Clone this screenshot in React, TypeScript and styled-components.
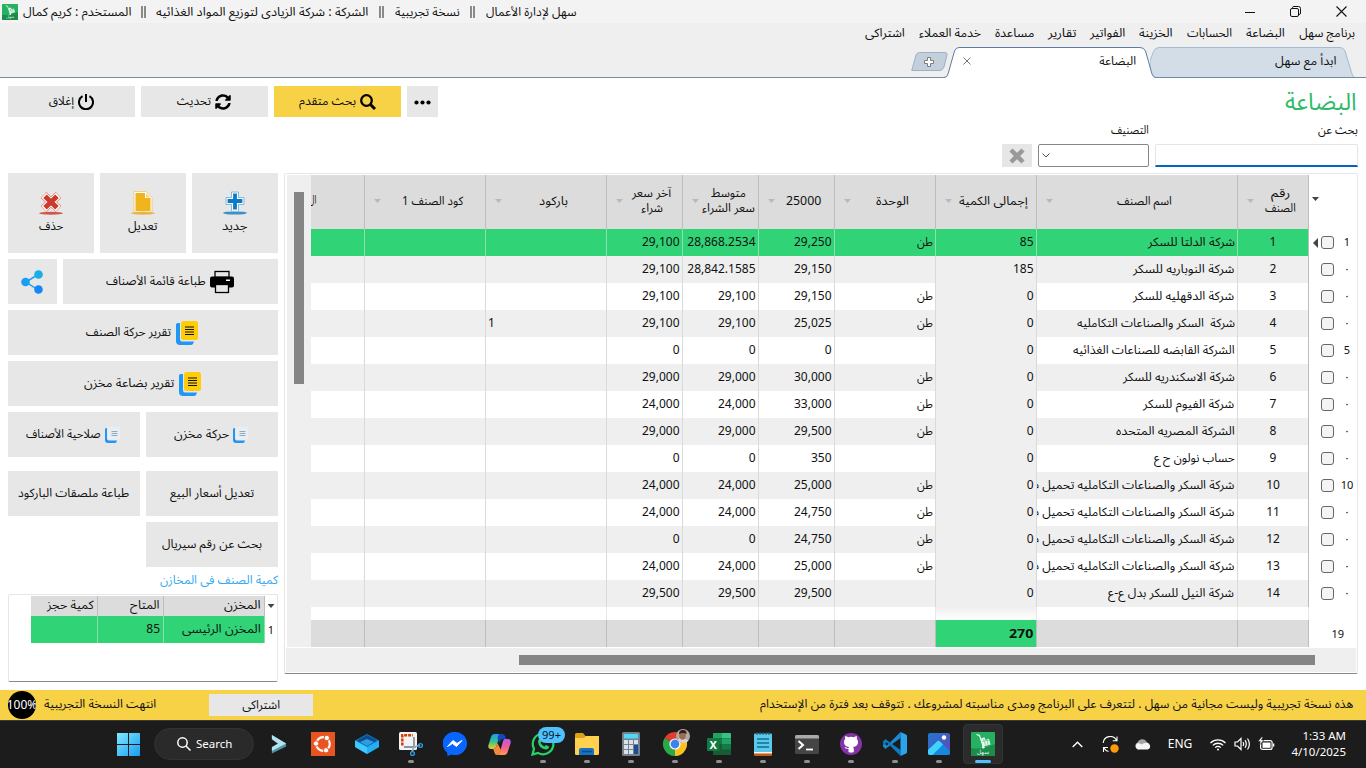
import React, { useLayoutEffect, useRef, useState } from 'react';
import styled, { createGlobalStyle, css } from 'styled-components';

const GREEN = '#30d477';

const Global = createGlobalStyle`
  * { box-sizing: border-box; }
  body { margin: 0; background: #fff; overflow: hidden; }
  svg { display: block; flex: none; }
`;

const Screen = styled.div`
  width: 1366px;
  height: 768px;
  display: flex;
  flex-direction: column;
  overflow: hidden;
  font-family: 'Noto Sans', 'Noto Sans Arabic', 'DejaVu Sans', sans-serif;
  font-size: 12px;
  line-height: 16px;
  color: #111;
`;

/* Text run squeezed or stretched to an exact width. */
const FitBox = styled.span<{ $w: number }>`
  display: inline-block;
  flex: none;
  width: ${(p) => p.$w}px;
  direction: rtl;
  text-align: right;
  white-space: pre;
`;
const FitInner = styled.span`
  display: inline-block;
  transform-origin: 100% 50%;
`;
function Fit({ w, children }: { w: number; children: React.ReactNode }) {
  const ref = useRef<HTMLSpanElement>(null);
  const [scale, setScale] = useState(1);
  useLayoutEffect(() => {
    if (ref.current && ref.current.offsetWidth) setScale(w / ref.current.offsetWidth);
  }, [w]);
  return (
    <FitBox $w={w}>
      <FitInner ref={ref} style={{ transform: `scaleX(${scale})` }}>{children}</FitInner>
    </FitBox>
  );
}

/* ---------- title bar ---------- */
const TitleBar = styled.div`
  height: 23px;
  flex: none;
  background: #f3f3f3;
  display: flex;
  align-items: center;
  padding: 0 1px 0 2px;
`;
const TitleText = styled.div`
  direction: rtl;
  width: 553px;
  margin-left: 5px;
  display: flex;
  justify-content: space-between;
  align-items: center;
`;
const Bars = styled.span`
  width: 5px;
  height: 12px;
  border: solid #8a8a8a;
  border-width: 0 2px;
`;
const WindowButtons = styled.div`
  margin-left: auto;
  display: flex;
  height: 21px;
`;
const WinButton = styled.div<{ $w: number }>`
  width: ${(p) => p.$w}px;
  display: flex;
  align-items: center;
  justify-content: center;
`;

function SahlLogo({ size }: { size: number }) {
  return (
    <svg width={size} height={size} viewBox="0 0 24 24">
      <rect width="24" height="24" rx="1" fill="#25b062" />
      <path d="M0 16 Q10 18 24 12 V24 H0z" fill="#1c8b4b" />
      <path d="M5.500 2.500 L8.500 3.500 L12 14" stroke="#fff" strokeWidth="1.100" fill="none" />
      <path d="M10 6.500 l3.500-1.200 .9 2.600 3.600-1.200 1.500 5.800-7.600 2z" fill="#e9f8ef" />
      <path d="M11 9.500l7.500-1.500M12.500 7l2 6M16 8l1 5" stroke="#25b062" strokeWidth=".5" />
      <circle cx="12.300" cy="15.300" r="1.300" fill="#fff" />
      <text x="12" y="21.500" fontSize="6" fill="#d9f3e3" textAnchor="middle" fontFamily="DejaVu Sans, sans-serif">سهل</text>
    </svg>
  );
}

/* ---------- menu and tabs ---------- */
const MenuArea = styled.div`
  height: 55px;
  flex: none;
  background: #efefef;
  display: flex;
  flex-direction: column;
`;
const Menu = styled.div`
  direction: rtl;
  height: 20px;
  padding-right: 11px;
  display: flex;
  align-items: center;
  gap: 14px;
`;
const Tabs = styled.div`
  direction: rtl;
  height: 35px;
  display: flex;
  align-items: flex-end;
  border-bottom: 1px solid #6f8cab;
  padding-right: 10px;
`;
const Tab = styled.div<{ $w: number; $overlap?: number }>`
  position: relative;
  width: ${(p) => p.$w}px;
  height: 31px;
  margin-bottom: -1px;
  margin-right: ${(p) => -(p.$overlap || 0)}px;
  padding: 0 20px 3px 19px;
  display: flex;
  align-items: center;
  justify-content: space-between;
  & > svg:first-child { position: absolute; left: 0; top: 0; }
  & > *:not(:first-child) { position: relative; }
`;
const AddTab = styled.div`
  width: 37px;
  height: 25px;
  margin-right: -4px;
`;

/* ---------- heading ---------- */
const Main = styled.div`
  height: 612px;
  flex: none;
  background: #fff;
  display: flex;
  flex-direction: column;
`;
const Top = styled.div`
  height: 95px;
  display: flex;
  justify-content: space-between;
  padding: 8px 8px 0;
`;
const Toolbar = styled.div`
  display: flex;
  gap: 6px;
`;
const Button = styled.div<{ $w?: number; $h: number; $gap?: number; $shift?: number; $primary?: boolean; $stack?: boolean }>`
  direction: rtl;
  ${(p) => (p.$w ? css`width: ${p.$w}px;` : css`flex: 1;`)}
  height: ${(p) => p.$h}px;
  padding-right: ${(p) => p.$shift || 0}px;
  background: ${(p) => (p.$primary ? '#f7d247' : '#e7e7e7')};
  display: flex;
  flex-direction: ${(p) => (p.$stack ? 'column' : 'row')};
  align-items: center;
  justify-content: center;
  gap: ${(p) => p.$gap ?? 4}px;
  ${(p) => (p.$stack
    ? css`gap: 3px; padding-bottom: 1px;`
    : css`& > svg { margin-top: 1px; } & > span { margin-bottom: 1px; }`)}
`;
const SearchArea = styled.div`
  direction: rtl;
  width: 356px;
`;
const Heading = styled.div`
  font-size: 24px;
  line-height: 30px;
  color: #2fbb6a;
  height: 36px;
  margin-right: 1px;
`;
const Fields = styled.div`
  display: flex;
  gap: 6px;
  align-items: flex-end;
`;
const Field = styled.div<{ $w: number }>`
  width: ${(p) => p.$w}px;
  display: flex;
  flex-direction: column;
  gap: 6px;
`;
const Input = styled.div`
  height: 23px;
  border: 1px solid #e5e5e5;
  border-bottom: 2px solid #0067c0;
  border-radius: 2px 2px 0 0;
`;
const Select = styled.div`
  height: 23px;
  border: 1px solid #868686;
  border-radius: 2px;
  display: flex;
  align-items: center;
  justify-content: flex-end;
  padding-left: 3px;
`;
const Clear = styled.div`
  width: 30px;
  height: 23px;
  background: #e6e6e6;
  display: flex;
  align-items: center;
  justify-content: center;
`;

/* ---------- body ---------- */
const Body = styled.div`
  display: flex;
  padding-left: 8px;
  gap: 6px;
`;
const Side = styled.div`
  direction: rtl;
  width: 270px;
  display: flex;
  flex-direction: column;
  gap: 6px;
`;
const SideRow = styled.div<{ $top?: number }>`
  display: flex;
  gap: 6px;
  margin-top: ${(p) => p.$top || 0}px;
`;
const StockTitle = styled.div`
  color: #35aaf0;
  height: 21px;
  margin-top: -1px;
`;
const StockGrid = styled.div`
  height: 88px;
  margin-top: -5px;
  border: 1px solid #e6e6e6;
  border-bottom-color: #8a8a8a;
  border-radius: 2px;
  padding: 1px 0 0;
`;
const StockRow = styled.div<{ $head?: boolean }>`
  display: flex;
  height: ${(p) => (p.$head ? 20 : 27)}px;
  ${(p) => p.$head && css`& > div:not(:first-child) { background: #dcdcdc; border-color: #bdbdbd; padding-bottom: 2px; }`}
  ${(p) => !p.$head && css`& > div:not(:first-child) { background: ${GREEN}; }`}
`;
const StockLead = styled.div`
  width: 12px;
  display: flex;
  align-items: center;
  justify-content: center;
  font-size: 11px;
`;
const StockCell = styled.div<{ $w: number }>`
  width: ${(p) => p.$w}px;
  padding: 0 3px 1px;
  display: flex;
  align-items: center;
  border-right: 1px solid #8fdcae;
`;

const Grid = styled.div`
  direction: rtl;
  width: 1074px;
  height: 501px;
  border: 1px solid #e6e6e6;
  border-bottom: 1px solid #858585;
  border-radius: 2px;
  padding: 1px 0 0 2px;
`;
const GridTop = styled.div`
  display: flex;
  height: 472px;
`;
const Rows = styled.div`
  width: 1046px;
`;
const Row = styled.div<{ $h: number }>`
  display: flex;
  height: ${(p) => p.$h}px;
  overflow: hidden;
`;
const RowHead = styled.div`
  width: 48px;
  flex: none;
  display: flex;
  align-items: center;
  font-size: 11px;
`;
const RowNo = styled.span`
  width: 23px;
  padding: 0 0 1px 3px;
  text-align: center;
`;
const Total = styled.span`
  margin-right: 13px;
`;
const CurrentMark = styled.svg`
  margin-right: 3px;
`;
const Check = styled.span`
  width: 13px;
  height: 13px;
  border: 1px solid #666;
  border-radius: 3px;
  background: #f4f4f4;
`;
type Tone = 'head' | 'sel' | 'odd' | 'even' | 'foot' | 'fade';
const bg: Record<Tone, string> = { head: '#dcdcdc', sel: GREEN, odd: '#fff', even: '#efefef', foot: '#dcdcdc', fade: '#fff' };
const line: Record<Tone, string> = { head: '#bdbdbd', sel: '#8cdfaf', odd: '#dadada', even: '#dadada', foot: '#bdbdbd', fade: '#e8e8e8' };
const Cell = styled.div<{ $w: number; $tone: Tone; $qty?: boolean; $first?: boolean; $align?: string; $clipped?: boolean }>`
  width: ${(p) => p.$w}px;
  flex: none;
  padding: 0 ${(p) => (p.$clipped ? 48 : p.$tone === 'head' ? 1 : p.$align ? 2 : 2.5)}px 1px ${(p) => (p.$clipped ? 0 : 2)}px;
  overflow: hidden;
  display: flex;
  align-items: center;
  justify-content: ${(p) => p.$align || 'flex-start'};
  white-space: pre;
  border-right: 1px solid ${(p) => (p.$first ? '#bdbdbd' : line[p.$tone])};
  background: ${(p) => (p.$qty && p.$tone === 'fade' ? 'linear-gradient(#efefef, #fff)' : p.$qty && p.$tone === 'foot' ? GREEN : p.$qty && p.$tone === 'odd' ? '#efefef' : bg[p.$tone])};
  ${(p) => p.$tone === 'head' && css`padding-bottom: 4px;`}
  ${(p) => p.$tone === 'foot' && css`font-weight: 700; font-size: 13px;`}
`;
const HeadLabel = styled.div`
  flex: 1;
  display: flex;
  flex-direction: column;
  align-items: center;
  line-height: 15px;
`;
const HeadArrow = styled.div<{ $dark?: boolean; $lead?: boolean }>`
  flex: none;
  width: 7px;
  height: 4px;
  margin: ${(p) => (p.$dark ? (p.$lead ? '0 15px 6px 0' : '0') : '2px 0 0 7px')};
  ${(p) => p.$lead && css`margin-right: auto; margin-left: 3px;`}
  clip-path: polygon(0 0, 100% 0, 50% 100%);
  background: ${(p) => (p.$dark ? '#444' : '#b9b9b9')};
`;
const VScroll = styled.div`
  width: 24px;
  background: #efefef;
  padding: 17px 7px;
`;
const VThumb = styled.div`
  width: 10px;
  height: 192px;
  background: #858585;
`;
const HScroll = styled.div`
  height: 24px;
  margin: 1px 1px 0 -1px;
  background: #efefef;
  display: flex;
  align-items: center;
  padding-right: 41px;
`;
const HThumb = styled.div`
  width: 796px;
  height: 10px;
  background: #858585;
`;

/* ---------- status bar ---------- */
const Status = styled.div`
  height: 30px;
  flex: none;
  background: #f7d247;
  display: flex;
  align-items: center;
  padding: 0 13px 0 8px;
  & > span { margin-bottom: 2px; }
`;
const Percent = styled.div`
  width: 28px;
  height: 28px;
  border-radius: 50%;
  background: #000;
  color: #fff;
  display: flex;
  align-items: center;
  justify-content: center;
  overflow: hidden;
  margin-right: 8px;
`;
const StatusButton = styled.div`
  width: 104px;
  height: 22px;
  margin: 0 auto 0 53px;
  background: #e7e7e7;
  display: flex;
  align-items: center;
  justify-content: center;
`;

/* ---------- taskbar ---------- */
const Taskbar = styled.div`
  height: 48px;
  flex: none;
  background: #1c1c1c;
  border-top: 1px solid #3a3a33;
  display: flex;
  align-items: center;
  padding: 0 20px 1px 106px;
  color: #fff;
`;
const Slot = styled.div<{ $w?: number; $active?: boolean }>`
  position: relative;
  width: ${(p) => p.$w || 44}px;
  height: 40px;
  display: flex;
  align-items: center;
  justify-content: center;
  ${(p) => p.$active && css`
    &::before { content: ''; position: absolute; inset: 0 2px; background: #2b2b2b; border: 1px solid #343434; border-radius: 4px; }
    & > svg { position: relative; }
  `}
`;
const Dot = styled.i<{ $active?: boolean }>`
  position: absolute;
  bottom: 1px;
  left: 50%;
  width: ${(p) => (p.$active ? 16 : 6)}px;
  height: 3px;
  margin-left: ${(p) => (p.$active ? -8 : -3)}px;
  border-radius: 2px;
  background: ${(p) => (p.$active ? '#4cc2ff' : '#8f8f8f')};
`;
const Badge = styled.span`
  position: absolute;
  left: 17px;
  top: 3px;
  width: 27px;
  height: 16px;
  border-radius: 8px;
  background: #4cc2ff;
  color: #111;
  font-size: 11px;
  line-height: 16px;
  text-align: center;
`;
const SearchPill = styled.div`
  width: 100px;
  height: 32px;
  margin: 0 3px 0 4px;
  border-radius: 16px;
  background: #2a2a2a;
  border: 1px solid #323232;
  display: flex;
  align-items: center;
  padding-left: 22px;
  gap: 5px;
  font-size: 11.500px;
`;
const Tray = styled.div`
  margin-left: auto;
  display: flex;
  align-items: center;
`;
const Clock = styled.div`
  width: 65px;
  text-align: right;
  font-size: 11.500px;
  line-height: 16px;
`;

const MENU: [string, number][] = [
  ['برنامج سهل', 56], ['البضاعة', 39], ['الحسابات', 45], ['الخزينة', 34], ['الفواتير', 35],
  ['تقارير', 28], ['مساعدة', 39], ['خدمة العملاء', 62], ['اشتراكى', 40],
];

const W = [71, 201, 101, 101, 76, 76, 76, 121, 121, 54];
const HEADS: [string, number][][] = [
  [['رقم', 19], ['الصنف', 31]],
  [['اسم الصنف', 55]],
  [['إجمالى الكمية', 69]],
  [['الوحدة', 33]],
  [['25000', 35]],
  [['متوسط', 35], ['سعر الشراء', 53]],
  [['آخر سعر', 39], ['شراء', 22]],
  [['باركود', 29]],
  [['كود الصنف 1', 61]],
];

const LONG = 'شركة السكر والصناعات التكامليه تحميل م';
const DATA: [string, number, string, string, string, string, string, string?][] = [
  ['شركة الدلتا للسكر', 87, '85', 'طن', '29,250', '28,868.2534', '29,100'],
  ['شركة النوباريه للسكر', 101, '185', '', '29,150', '28,842.1585', '29,100'],
  ['شركة الدقهليه للسكر', 101, '0', 'طن', '29,150', '29,100', '29,100'],
  ['شركة  السكر والصناعات التكامليه', 158, '0', 'طن', '25,025', '29,100', '29,100', '1'],
  ['الشركة القابضه للصناعات الغذائيه', 162, '0', '', '0', '0', '0'],
  ['شركة الاسكندريه للسكر', 112, '0', 'طن', '30,000', '29,000', '29,000'],
  ['شركة الفيوم للسكر', 91, '0', 'طن', '33,000', '24,000', '24,000'],
  ['الشركة المصريه المتحده', 119, '0', 'طن', '29,500', '29,000', '29,000'],
  ['حساب نولون ح ع', 81, '0', '', '350', '0', '0'],
  [LONG, 201, '0', 'طن', '25,000', '24,000', '24,000'],
  [LONG, 201, '0', 'طن', '24,750', '24,000', '24,000'],
  [LONG, 201, '0', 'طن', '24,750', '0', '0'],
  [LONG, 201, '0', 'طن', '25,000', '24,000', '24,000'],
  ['شركة النيل للسكر بدل ع-ع', 126, '0', '', '29,500', '29,500', '29,500'],
];

const DocIcon = () => (
  <svg width="22" height="24" viewBox="0 0 22 24">
    <path d="M0 3.500 Q0 2 2 2 H4 V18 Q4 20.500 6 20.500 H18 Q17 24 15 24 H4 Q0 24 0 20z" fill="#2196f3" />
    <rect x="5" y="0" width="17" height="19" rx="2.500" fill="#ffcc08" />
    <path d="M9 6.500h9M9 9h9M9 11.500h9M9 14h9" stroke="#111" strokeWidth="1.200" transform="translate(0 -.5)" />
  </svg>
);
const SmallDocIcon = () => (
  <svg width="15" height="16" viewBox="0 0 15 16">
    <path d="M0 2 Q0 1 2 1 V11.500 Q2 13.500 4 13.500 H12 Q11.500 16 10 16 H3 Q0 16 0 13z" fill="#2196f3" />
    <rect x="3" y="0" width="12" height="13" rx="1.500" fill="#e8eef2" />
    <path d="M6.500 4.500h6M6.500 6.500h6M6.500 8.500h6" stroke="#7b99a8" strokeWidth=".8" />
  </svg>
);

const running = <Dot />;

export default function App() {
  return (
    <Screen>
      <Global />
      <TitleBar>
        <SahlLogo size={16} />
        <TitleText>
          <Fit w={91}>سهل لإدارة الأعمال</Fit><Bars />
          <Fit w={65}>نسخة تجريبية</Fit><Bars />
          <Fit w={212}>الشركة : شركة الزيادى لتوزيع المواد الغذائيه</Fit><Bars />
          <Fit w={108}>المستخدم : كريم كمال</Fit>
        </TitleText>
        <WindowButtons>
          <WinButton $w={46}><svg width="10" height="10"><path d="M0 5.500h10" stroke="#111" /></svg></WinButton>
          <WinButton $w={44}>
            <svg width="11" height="11" fill="none" stroke="#111"><rect x=".5" y="2.500" width="8" height="8" rx="1.500" /><path d="M2.500 2V1.500Q2.500 .5 4 .5H8.500Q10.500 .5 10.500 2.500V7Q10.500 8.500 9 8.500" /></svg>
          </WinButton>
          <WinButton $w={48}><svg width="11" height="11"><path d="M.5.5l10 10M10.500.5l-10 10" stroke="#111" strokeWidth="1.100" /></svg></WinButton>
        </WindowButtons>
      </TitleBar>
      <MenuArea>
        <Menu>{MENU.map(([t, w]) => <Fit key={t} w={w}>{t}</Fit>)}</Menu>
        <Tabs>
          <Tab $w={206}>
            <svg width="206" height="31" viewBox="0 0 206 31"><path d="M0 30.500 V14 L3.500 4.500 Q5 .5 9 .5 H190 Q193.500 .5 195 4 L202 27 Q203 30.500 205 30.500" fill="#d3dde8" stroke="#a3bbd3" /><path d="M0 30.500H206" stroke="#6f8cab" /></svg>
            <Fit w={61}>ابدأ مع سهل</Fit>
          </Tab>
          <Tab $w={212} $overlap={6}>
            <svg width="212" height="31" viewBox="0 0 212 31"><path d="M0 30.500 Q3 30.500 4 27 L10.500 4 Q12 .5 15 .5 H196 Q200 .5 201.500 4 L208 27 Q209 30.500 212 30.500 V31 H0z" fill="#fff" /><path d="M0 30.500 Q3 30.500 4 27 L10.500 4 Q12 .5 15 .5 H196 Q200 .5 201.500 4 L208 27 Q209 30.500 212 30.500" fill="none" stroke="#5d7c9f" /></svg>
            <Fit w={37}>البضاعة</Fit>
            <svg width="8" height="8"><path d="M.5.5l7 7M7.500.5l-7 7" stroke="#777" /></svg>
          </Tab>
          <AddTab>
            <svg width="37" height="20" viewBox="0 0 37 20">
              <path d="M.7 18.500 L5 3 Q6 .5 8.500 .5 H34 Q36.500 .5 36 3 L33 15 Q31.500 18.500 29 18.500z" fill="#c3cfdb" stroke="#9db1c6" />
              <path d="M16.500 5.500h3v3h3v3h-3v3h-3v-3h-3v-3h3z" fill="#fff" stroke="#7d7d7d" />
            </svg>
          </AddTab>
        </Tabs>
      </MenuArea>
      <Main>
        <Top>
          <Toolbar>
            <Button $w={127} $h={31}>
              <svg width="16" height="16" viewBox="0 0 16 16" fill="none" stroke="#000" strokeWidth="2"><path d="M4.500 2.200a7 7 0 1 0 7 0M8 0v8" /></svg>
              <Fit w={25}>إغلاق</Fit>
            </Button>
            <Button $w={127} $h={31} $shift={1}>
              <svg width="16" height="16" viewBox="0 0 512 512"><path d="M370 134C339 105 299 89 256 89c-77 0-144 53-163 127-1 5-6 9-12 9H24c-8 0-13-7-12-14C33 95 135 8 256 8c66 0 127 26 171 69l36-36c15-15 41-4 41 17v134c0 13-11 24-24 24H346c-21 0-32-26-17-41zM32 296h134c21 0 32 26 17 41l-41 41c31 29 71 45 114 45 77 0 144-53 163-127 1-5 6-9 12-9h57c8 0 13 7 12 14-21 116-123 203-244 203-66 0-127-26-171-69l-36 36c-15 15-41 4-41-17V320c0-13 11-24 24-24z" /></svg>
              <Fit w={34}>تحديث</Fit>
            </Button>
            <Button $w={127} $h={31} $primary>
              <svg width="16" height="16" viewBox="0 0 16 16" fill="none" stroke="#000"><circle cx="6.500" cy="6.500" r="5.300" strokeWidth="2.300" /><path d="M10.500 10.500l4.500 4.500" strokeWidth="3" /></svg>
              <Fit w={57}>بحث متقدم</Fit>
            </Button>
            <Button $w={31} $h={31}>
              <svg width="17" height="5"><circle cx="2.500" cy="2.500" r="2.100" /><circle cx="8.500" cy="2.500" r="2.100" /><circle cx="14.500" cy="2.500" r="2.100" /></svg>
            </Button>
          </Toolbar>
          <SearchArea>
            <Heading><Fit w={72}>البضاعة</Fit></Heading>
            <Fields>
              <Field $w={203}><Fit w={40}>بحث عن</Fit><Input /></Field>
              <Field $w={111}><Fit w={38}>التصنيف</Fit><Select><svg width="8" height="5"><path d="M.5.5l3.500 3.500L7.500.5" stroke="#555" fill="none" /></svg></Select></Field>
              <Clear><svg width="16" height="16"><path d="M2 2l12 12M14 2L2 14" stroke="#999" strokeWidth="4.500" /></svg></Clear>
            </Fields>
          </SearchArea>
        </Top>
        <Body>
          <Side>
            <SideRow>
              <Button $h={80} $stack>
                <svg width="24" height="24" viewBox="0 0 24 24"><path d="M9.500 2h5v5.500H20v5h-5.500V19h-5v-6.500H4v-5h5.500z" fill="#0b7ac6" stroke="#fff" strokeWidth="1.200" /><path d="M8.500 1h7v5.500H21v7h-5.500V20M8.500 20v-6.500H3v-7h5.500V1" fill="none" stroke="#58a7dc" strokeWidth=".7" /><ellipse cx="12" cy="22" rx="12" ry="1.600" fill="#3b91cb" /></svg>
                <Fit w={25}>جديد</Fit>
              </Button>
              <Button $h={80} $stack>
                <svg width="24" height="24" viewBox="0 0 24 24"><path d="M3 .5h12l6 6V21H3z" fill="#fff" stroke="#edc05a" strokeWidth=".7" /><path d="M4.500 2h9.500v5h5.500v13h-15z" fill="#f0b41f" /><path d="M15 2l4.500 4.500H15z" fill="#f6d583" /><ellipse cx="12" cy="22.300" rx="12" ry="1.500" fill="#e9b53d" /></svg>
                <Fit w={30}>تعديل</Fit>
              </Button>
              <Button $h={80} $stack>
                <svg width="24" height="24" viewBox="0 0 24 24"><path d="M4.500 4l15 14M19.500 4l-15 14" stroke="#d9766c" strokeWidth="8.200" /><path d="M4.800 4.300l14.400 13.400M19.200 4.300L4.800 17.700" stroke="#fff" strokeWidth="7" /><path d="M6 5.200l12 11.600M18 5.200L6 16.800" stroke="#ca3a2d" strokeWidth="5" /><ellipse cx="12" cy="22.300" rx="12" ry="1.500" fill="#cf5549" /></svg>
                <Fit w={24}>حذف</Fit>
              </Button>
            </SideRow>
            <SideRow>
              <Button $h={45} $shift={1}>
                <svg width="24" height="24" viewBox="0 0 24 24"><rect y="6.500" width="24" height="11" rx="2" /><rect x="5" y="1.500" width="14" height="5.500" fill="#e7e7e7" stroke="#000" strokeWidth="1.300" /><rect x="5.500" y="14.500" width="13" height="8" fill="#e7e7e7" stroke="#000" strokeWidth="1.300" /><rect x="16" y="9.500" width="4" height="1.500" fill="#fff" /></svg>
                <Fit w={100}>طباعة قائمة الأصناف</Fit>
              </Button>
              <Button $w={49} $h={45} $shift={1}>
                <svg width="22" height="24" viewBox="0 0 22 24"><path d="M17 4.500L5 12l12 8" stroke="#1e9dea" strokeWidth="1.500" fill="none" /><circle cx="17.500" cy="4.500" r="4.300" fill="#17aeea" /><circle cx="4.500" cy="12" r="4.300" fill="#1b9cf5" /><circle cx="17.500" cy="19.500" r="4.300" fill="#1687fb" /></svg>
              </Button>
            </SideRow>
            <SideRow><Button $h={45} $gap={5} $shift={2}><DocIcon /><Fit w={85}>تقرير حركة الصنف</Fit></Button></SideRow>
            <SideRow><Button $h={45} $gap={5} $shift={1}><DocIcon /><Fit w={90}>تقرير بضاعة مخزن</Fit></Button></SideRow>
            <SideRow>
              <Button $h={45} $shift={2}><SmallDocIcon /><Fit w={55}>حركة مخزن</Fit></Button>
              <Button $h={45} $shift={2}><SmallDocIcon /><Fit w={75}>صلاحية الأصناف</Fit></Button>
            </SideRow>
            <SideRow $top={8}>
              <Button $h={45}><Fit w={84}>تعديل أسعار البيع</Fit></Button>
              <Button $h={45}><Fit w={111}>طباعة ملصقات الباركود</Fit></Button>
            </SideRow>
            <SideRow><Button $w={132} $h={45}><Fit w={100}>بحث عن رقم سيريال</Fit></Button></SideRow>
            <StockTitle><Fit w={118}>كمية الصنف فى المخازن</Fit></StockTitle>
            <StockGrid>
              <StockRow $head>
                <StockLead><HeadArrow $dark /></StockLead>
                <StockCell $w={101}><Fit w={37}>المخزن</Fit></StockCell>
                <StockCell $w={66}><Fit w={30}>المتاح</Fit></StockCell>
                <StockCell $w={67}><Fit w={47}>كمية حجز</Fit></StockCell>
              </StockRow>
              <StockRow>
                <StockLead>1</StockLead>
                <StockCell $w={101}><Fit w={79}>المخزن الرئيسى</Fit></StockCell>
                <StockCell $w={66}>85</StockCell>
                <StockCell $w={67} />
              </StockRow>
            </StockGrid>
          </Side>
          <Grid>
            <GridTop>
              <Rows>
                <Row $h={54}>
                  <RowHead><HeadArrow $dark $lead /></RowHead>
                  {HEADS.map((lines, i) => (
                    <Cell key={i} $w={W[i]} $tone="head" $first={i === 0}>
                      <HeadLabel>{lines.map(([t, w]) => <Fit key={t} w={w}>{t}</Fit>)}</HeadLabel>
                      <HeadArrow />
                    </Cell>
                  ))}
                  <Cell $w={54} $tone="head" $clipped><Fit w={7}>ال</Fit></Cell>
                </Row>
                {DATA.map((r, i) => {
                  const tone: Tone = i === 0 ? 'sel' : i % 2 ? 'even' : 'odd';
                  return (
                    <Row key={i} $h={27}>
                      <RowHead>
                        <RowNo>{i === 0 || i === 4 || i === 9 ? i + 1 : '·'}</RowNo>
                        <Check />
                        {i === 0 && <CurrentMark width="5" height="10"><path d="M5 0v10L0 5z" fill="#444" /></CurrentMark>}
                      </RowHead>
                      <Cell $w={W[0]} $tone={tone} $first $align="center">{i + 1}</Cell>
                      <Cell $w={W[1]} $tone={tone}><Fit w={r[1]}>{r[0]}</Fit></Cell>
                      <Cell $w={W[2]} $tone={tone} $qty>{r[2]}</Cell>
                      <Cell $w={W[3]} $tone={tone}>{r[3] && <Fit w={16}>{r[3]}</Fit>}</Cell>
                      <Cell $w={W[4]} $tone={tone}>{r[4]}</Cell>
                      <Cell $w={W[5]} $tone={tone}>{r[5]}</Cell>
                      <Cell $w={W[6]} $tone={tone}>{r[6]}</Cell>
                      <Cell $w={W[7]} $tone={tone} $align="flex-end">{r[7]}</Cell>
                      <Cell $w={W[8]} $tone={tone} />
                      <Cell $w={W[9]} $tone={tone} />
                    </Row>
                  );
                })}
                <Row $h={13}>
                  <RowHead />
                  {W.map((w, i) => <Cell key={i} $w={w} $tone="fade" $qty={i === 2} />)}
                </Row>
                <Row $h={27}>
                  <RowHead><Total>19</Total></RowHead>
                  {W.map((w, i) => <Cell key={i} $w={w} $tone="foot" $qty={i === 2} $first={i === 0}>{i === 2 && <Fit w={24}>270</Fit>}</Cell>)}
                </Row>
              </Rows>
              <VScroll><VThumb /></VScroll>
            </GridTop>
            <HScroll><HThumb /></HScroll>
          </Grid>
        </Body>
      </Main>
      <Status>
        <Percent>100%</Percent>
        <Fit w={112}>انتهت النسخة التجريبية</Fit>
        <StatusButton><Fit w={38}>اشتراكى</Fit></StatusButton>
        <Fit w={593}>هذه نسخة تجريبية وليست مجانية من سهل . لتتعرف على البرنامج ومدى مناسبته لمشروعك . تتوقف بعد فترة من الإستخدام</Fit>
      </Status>
      <Taskbar>
        <Slot>
          <svg width="23" height="23" viewBox="0 0 23 23"><defs><linearGradient id="win" x1="0" y1="0" x2="1" y2="1"><stop stopColor="#7fe8ff" /><stop offset="1" stopColor="#189df0" /></linearGradient></defs><path d="M0 0h11v11H0zM12 0h11v11H12zM0 12h11v11H0zM12 12h11v11H12z" fill="url(#win)" /></svg>
        </Slot>
        <SearchPill>
          <svg width="14" height="14" fill="none" stroke="#fff" strokeWidth="1.500"><circle cx="5.500" cy="5.500" r="4.700" /><path d="M9 9l4.500 4.500" /></svg>
          Search
        </SearchPill>
        <Slot><svg width="16" height="20" viewBox="0 0 18 20" preserveAspectRatio="none"><path d="M1 1l16 8.500v3L1 19.500v-5l7-4.500-7-4.500z" fill="#4b93aa" /><path d="M1 1l16 8.500L1 17v-4l7-3.500L1 5z" fill="#b5e3ed" /></svg></Slot>
        <Slot><svg width="24" height="24" viewBox="0 0 24 24"><rect width="24" height="24" fill="#e95420" /><circle cx="12" cy="12" r="6.800" fill="none" stroke="#fff" strokeWidth="2.200" /><g fill="#fff" stroke="#e95420" strokeWidth="1"><circle cx="5" cy="11.500" r="2.700" /><circle cx="15.800" cy="6" r="2.700" /><circle cx="15" cy="18.300" r="2.700" /></g></svg></Slot>
        <Slot><svg width="24" height="20" viewBox="0 0 24 20"><path d="M12 0L24 6.500V13L12 20 0 13V6.500z" fill="#1278c4" /><path d="M12 1l10 5.500L12 12 2 6.500z" fill="#0b4d8c" /><path d="M5 8l7-3 7 3-7 4z" fill="#2f9be0" /><path d="M0 6.500L12 13v7L0 13z" fill="#3ccaff" /><path d="M24 6.500L12 13v7l12-7z" fill="#25aef1" /></svg></Slot>
        <Slot>
          <svg width="24" height="24" viewBox="0 0 24 24"><rect width="18" height="18" rx="1.500" fill="#f1f3f5" /><path d="M3.300 13.500V3.300h10.500" stroke="#d83b01" strokeWidth="2.500" strokeDasharray="3 1" fill="none" /><path d="M15 5v10M5 15h12" stroke="#8d949b" strokeWidth="1.800" /><path d="M15 15l6-2M15 15l-2 5" stroke="#aab" strokeWidth="1.800" /><circle cx="21.500" cy="13.500" r="1.900" fill="none" stroke="#279de5" strokeWidth="1.400" /><circle cx="13.500" cy="21.500" r="1.900" fill="none" stroke="#279de5" strokeWidth="1.400" /></svg>
          {running}
        </Slot>
        <Slot><svg width="24" height="24" viewBox="0 0 24 24"><path d="M12 0a12 11.500 0 0 1 0 23q-2 0-3.500-.5L4.500 24 4 20.500A11.500 11.500 0 0 1 12 0z" fill="#0866ff" /><path d="M4.500 14.500l5.500-6 4 3 5-3-5.500 6-4-3z" fill="#fff" stroke="#fff" strokeLinejoin="round" /></svg></Slot>
        <Slot>
          <svg width="23" height="21" viewBox="0 0 23 21">
            <defs>
              <linearGradient id="cpA" x2="0" y2="1"><stop stopColor="#1c9bea" /><stop offset=".5" stopColor="#36c48e" /><stop offset="1" stopColor="#f4c928" /></linearGradient>
              <linearGradient id="cpB" x2="0" y2="1"><stop stopColor="#b15bf0" /><stop offset=".5" stopColor="#f25d8f" /><stop offset="1" stopColor="#fb9b55" /></linearGradient>
            </defs>
            <path d="M6.500 0H13q-1.500 1-2 3L8.500 12q-.8 3-3.500 3H3Q-.5 15 .5 11L3 3q1-3 3.500-3z" fill="url(#cpA)" />
            <path d="M11 0h3.500q2 0 2.800 2.500l.9 2.500h-3q-2.500 0-3.200 2.500L11 9 9.500 4z" fill="#1746b8" />
            <path d="M17 5h3.500q3 .5 2 4.500L20 17q-1 4-4 4h-6q1.500-1 2-3l2.500-9Q15.200 5 17 5z" fill="url(#cpB)" />
            <path d="M5 15q2.700 0 3.500-3l.8-3L13 16l-.6 2q-.6 3-3.400 3-2 0-2.600-2.500L5.700 16z" fill="#f58a3c" />
          </svg>
        </Slot>
        <Slot>
          <svg width="24" height="24" viewBox="0 0 24 24"><path d="M1.500 22.500l1.500-5.700A10.300 10.300 0 1 1 7 20.900z" fill="none" stroke="#25d366" strokeWidth="2.200" /><path d="M8 7q1-1 2 1l.5 1.500-1 1.500q1.500 2.500 4 3.500l1.500-1.500 3 1.500q0 3-3 3Q8 17 7 10q0-2 1-3z" fill="#25d366" /></svg>
          <Badge>99+</Badge>{running}
        </Slot>
        <Slot><svg width="24" height="22" viewBox="0 0 24 22"><path d="M0 1.500Q0 0 1.500 0H8l2.500 3H24v7H0z" fill="#dda113" /><path d="M0 5h9l2-2h12q1 0 1 1v16.500q0 1.500-1.500 1.500h-21Q0 22 0 20.500z" fill="#ffd14f" /><path d="M4 22v-5q0-2 2-2h11q2 0 2 2v5z" fill="#1673c4" /><path d="M7 18.500h10" stroke="#0c4c8b" strokeWidth="1.500" /></svg>{running}</Slot>
        <Slot>
          <svg width="18" height="24" viewBox="0 0 18 24"><rect width="18" height="24" rx="1.500" fill="#76818d" /><rect x="2" y="2" width="14" height="4.500" fill="#50d9f7" /><path d="M2 8h4v4H2zM7 8h4v4H7zM12 8h4v4h-4zM2 13h4v4H2zM7 13h4v4H7zM2 18h4v4H2zM7 18h4v4H7z" fill="#dbe1e8" /><path d="M12 13h4v9h-4z" fill="#1a4d92" /></svg>{running}
        </Slot>
        <Slot>
          <svg width="30" height="30" viewBox="0 0 30 30"><g transform="translate(3 3)"><path d="M12 12L1.600 6A12 12 0 0 1 22.400 6z" fill="#e33b2e" /><path d="M12 12L1.600 6A12 12 0 0 0 12 24l5-9z" fill="#2aa84a" /><path d="M12 12l10.400-6A12 12 0 0 1 12 24z" fill="#fcc31e" /><circle cx="12" cy="12" r="5.600" fill="#fff" /><circle cx="12" cy="12" r="4.400" fill="#3b82ee" /></g><circle cx="23" cy="7" r="7" fill="#b4a79c" /><path d="M17.500 11q2-2.500 5-2t6 2.500q-2 3-5.500 2.500T17.500 11z" fill="#d9d4d2" /><ellipse cx="22.500" cy="6" rx="3.300" ry="4.700" fill="#9c6b55" /><path d="M19 5q0-4 4-4t3.500 4q-3-2-7.500 0z" fill="#2d211f" /></svg>{running}
        </Slot>
        <Slot>
          <svg width="24" height="22" viewBox="0 0 24 22"><path d="M6 0h9v5.500H6z" fill="#21a366" /><path d="M15 0h8q1 0 1 1v4.500h-9z" fill="#33c481" /><path d="M6 5.500h9V11H6z" fill="#107c41" /><path d="M15 5.500h9V11h-9z" fill="#21a366" /><path d="M6 11h18v10q0 1-1 1H6z" fill="#185c37" /><path d="M15 11h9v5.500h-9z" fill="#107c41" /><rect y="5" width="12.500" height="13" rx="1" fill="#107c41" /><text x="6.200" y="15.500" fontSize="11" fontWeight="700" textAnchor="middle" fill="#fff">X</text></svg>{running}
        </Slot>
        <Slot>
          <svg width="18" height="24" viewBox="0 0 18 24"><rect y="19" width="18" height="5" rx="1" fill="#c95a11" /><rect y="18" width="18" height="3.500" fill="#f4f4f4" /><rect y="1.500" width="18" height="18.500" rx="1" fill="#5ac9ea" /><path d="M3 0v3M6 0v3M9 0v3M12 0v3M15 0v3" stroke="#17556f" /><path d="M3 7h12M3 11h12M3 15h12" stroke="#126d94" strokeWidth="1.500" /></svg>{running}
        </Slot>
        <Slot>
          <svg width="24" height="19" viewBox="0 0 24 19"><rect width="24" height="19" rx="1.500" fill="#454545" /><path d="M0 3.500V1.500Q0 0 1.500 0h21Q24 0 24 1.500v2z" fill="#aaa" /><path d="M3.500 6l4.500 4-4.500 4" stroke="#fff" strokeWidth="2" fill="none" /><path d="M11 14.500h7" stroke="#fff" strokeWidth="1.800" /></svg>{running}
        </Slot>
        <Slot>
          <svg width="22" height="22" viewBox="0 0 22 22"><circle cx="11" cy="11" r="11" fill="#8534a5" /><path d="M8.500 19v-3q-3 .5-4-2 2 0 2.500 1 .7.500 1.500 0l.5-1Q4 13.500 4 9q0-2 1.200-3Q4.800 4.500 5.300 3 7 3.200 8.200 4.200q2.800-.8 5.600 0Q15 3.200 16.700 3q.5 1.500.1 3Q18 7 18 9q0 4.500-5 5 .8.700.8 2v3q-2.600 1-5.300 0z" fill="#fff" /></svg>{running}
        </Slot>
        <Slot>
          <svg width="24" height="24" viewBox="0 0 24 24"><path d="M17.500 0L4 13.500l-2.700-2L0 12.700v1.800L2.300 17 17.500 6z" fill="#168bd4" /><path d="M17.500 24L4 10.500l-2.700 2L0 11.300V9.500L2.300 7l15.200 11z" fill="#0f78c0" /><path d="M17.500 0l5.500 2.500q1 .5 1 1.500v16q0 1-1 1.500L17.500 24z" fill="#2ba4ee" /></svg>{running}
        </Slot>
        <Slot>
          <svg width="22" height="22" viewBox="0 0 22 22"><defs><linearGradient id="ph" x2="1" y2="1"><stop stopColor="#1b79cf" /><stop offset="1" stopColor="#6c42b5" /></linearGradient></defs><rect width="22" height="22" rx="2" fill="url(#ph)" /><path d="M0 17L9 8.500q1.500-1.500 3 0L22 18v2q0 2-2 2H2q-2 0-2-2z" fill="#1589df" /><path d="M0 17l9-8.500q1.500-1.500 3 0l3 3L4.500 22H2q-2 0-2-2z" fill="#3fd3fb" /><circle cx="16" cy="4.500" r="2.200" fill="#fff" /></svg>{running}
        </Slot>
        <Slot $active><SahlLogo size={24} /><Dot $active /></Slot>
        <Tray>
          <Slot $w={32}><svg width="11" height="7"><path d="M.7 6l4.800-4.800L10.300 6" stroke="#fff" strokeWidth="1.400" fill="none" /></svg></Slot>
          <Slot $w={34}>
            <svg width="17" height="17" viewBox="0 0 17 17"><path d="M1.200 7A7 7 0 0 1 14.500 4.500M15 .5v4.300h-4.300M6.500 15.500A7 7 0 0 1 2 12M1.500 16v-4.500H6" stroke="#fff" strokeWidth="1.100" fill="none" /><circle cx="12.500" cy="12.500" r="4.200" fill="#ff9a0a" /></svg>
          </Slot>
          <Slot $w={30}><svg width="17" height="12" viewBox="0 0 17 12"><path d="M4 11.500a4 3.800 0 0 1-.5-7A5 5 0 0 1 12 3l4 5z" fill="#a5a5a5" /><path d="M4 11.500a3.500 3.500 0 0 1 0-6.500q2 0 3.500 1.500 2-2 4.500-1.500a3.300 3.300 0 0 1 1.500 6.500z" fill="#f5f5f5" /></svg></Slot>
          <Slot $w={46}>ENG</Slot>
          <Slot $w={30}>
            <svg width="16" height="13" viewBox="0 0 16 13" fill="none" stroke="#fff" strokeWidth="1.300"><path d="M.5 5A10.600 10.600 0 0 1 15.500 5M2.800 7.400a7.400 7.400 0 0 1 10.400 0M5.200 9.600a4 4 0 0 1 5.600 0" /><circle cx="8" cy="11.500" r="1" fill="#fff" stroke="none" /></svg>
          </Slot>
          <Slot $w={18}>
            <svg width="17" height="14" viewBox="0 0 17 14" fill="none" stroke="#fff" strokeWidth="1.200"><path d="M1 5h2.500L7 1.500v11L3.500 9H1zM9 5q1.300 2 0 4M11 3.200q2.600 3.800 0 7.600M13.500 1.500q3.800 5.500 0 11" /></svg>
          </Slot>
          <Slot $w={30}>
            <svg width="17" height="14" viewBox="0 0 17 14"><rect x="2.600" y="3.600" width="11.500" height="8.800" rx="2" fill="none" stroke="#fff" strokeWidth="1.200" /><rect x="4.500" y="5.500" width="8" height="5.300" fill="#fff" /><path d="M15 6.500v3h1.300v-3z" fill="#fff" /><path d="M3.500 0L0 4.500h2.300L1.500 8 6 3H3.500L5 0z" fill="#fff" stroke="#1c1c1c" strokeWidth=".5" /></svg>
          </Slot>
          <Clock>1:33 AM<br />4/10/2025</Clock>
        </Tray>
      </Taskbar>
    </Screen>
  );
}
